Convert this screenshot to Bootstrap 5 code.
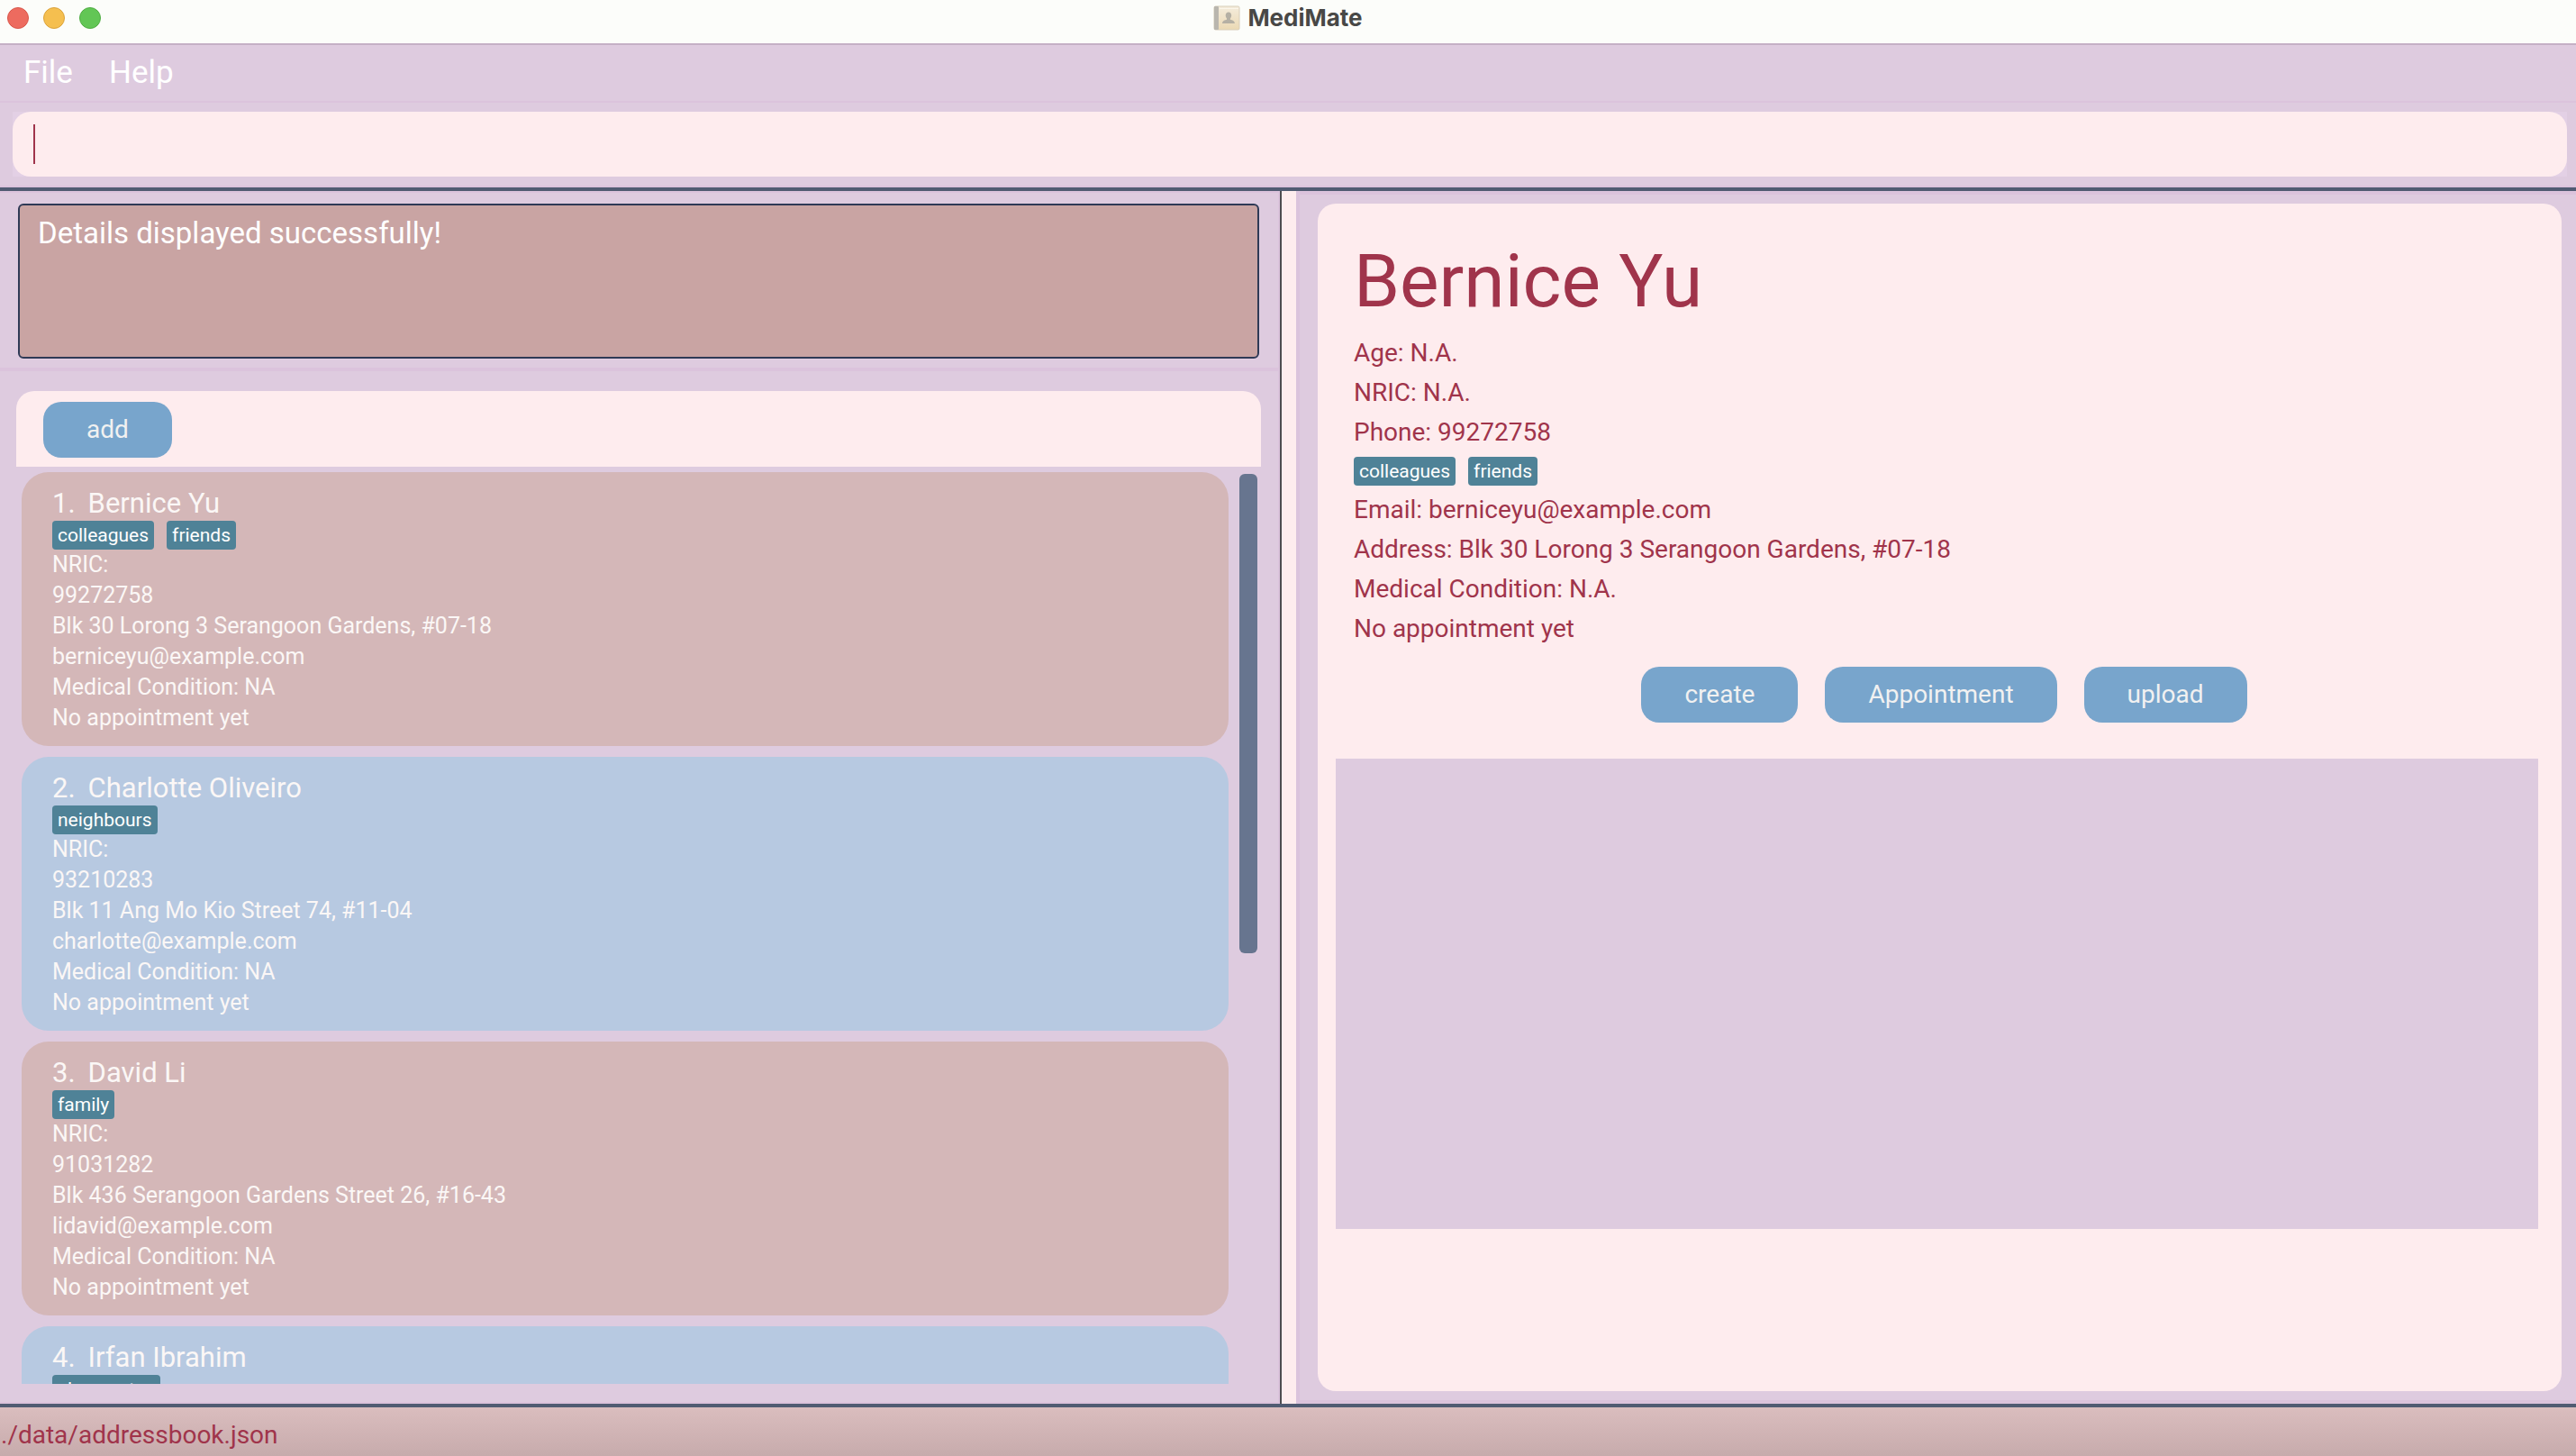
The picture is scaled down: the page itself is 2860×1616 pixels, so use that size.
<!DOCTYPE html>
<html lang="en">
<head>
<meta charset="utf-8">
<meta name="viewport" content="width=device-width, initial-scale=1">
<title>MediMate</title>
<link rel="stylesheet" href="https://cdn.jsdelivr.net/npm/bootstrap@5.3.0/dist/css/bootstrap.min.css">
<script src="https://cdn.jsdelivr.net/npm/bootstrap@5.3.0/dist/js/bootstrap.bundle.min.js"></script>
<style>
  :root {
    --lilac: #decbdf;
    --lilac-edge: #dbc3dc;
    --blush: #feecee;
    --wine: #a0344b;
    --slate: #505b72;
    --steel: #78a5cc;
  }
  body { font-family: Roboto, "Liberation Sans", sans-serif; background: var(--lilac); font-size: 25px; line-height: 34px; }
  .title-bar { height: 50px; padding: 0 8px 9px; background: #fcfdfa; border-bottom: 2px solid #c5b0c6; display: grid; grid-template-columns: 1fr auto 1fr; align-items: center; }
  .light { width: 24px; height: 24px; border-radius: 50%; border: 1px solid; }
  .light-close { background: #ed6b5f; border-color: #d9574b; }
  .light-min { background: #f5bf4f; border-color: #dba33b; }
  .light-max { background: #62c655; border-color: #50ad43; }
  .window-name { font-family: Inter, "Liberation Sans", sans-serif; font-size: 26px; line-height: 30px; font-weight: 700; color: #484846; }
  .menu-strip { height: 64px; padding-left: 6px; border-bottom: 2px solid var(--lilac-edge); }
  .menu-item { border: 0; background: none; color: #fff; font-size: 35px; line-height: 62px; padding: 0 20px; }
  .command-row { padding: 10px 10px 10px 14px; border-bottom: 2px solid var(--lilac-edge); }
  .command-well { background: #e3d0e5; }
  .command-box { height: 72px; border: 0; border-radius: 20px; color: var(--wine); font-size: 28px; padding: 0 24px; caret-color: transparent;
    background: linear-gradient(var(--wine), var(--wine)) 23px 50% / 2px 44px no-repeat var(--blush); }
  .command-box:focus { outline: 0; }
  .workspace { border-top: 4px solid var(--slate); border-bottom: 4px solid var(--slate); min-height: 0; }
  .pane { flex: 1 1 calc(50% - 9px); min-width: 0; min-height: 0; }
  .splitter { flex: 0 0 18px; background: var(--blush); border-left: 2px solid #4d4c50; }
  .pane-left { border: solid var(--lilac-edge); border-width: 2px 2px 2px 0; }
  .pane-right { border: 4px solid var(--lilac-edge); border-right: 0; padding: 10px 16px 10px 20px; }
  .result-row { padding: 12px 21px 10px 20px; border-bottom: 4px solid var(--lilac-edge); }
  .result-box { display: block; width: 100%; height: 172px; resize: none; background: #c9a4a3; color: #fff; border: 2px solid #2f3a56; border-radius: 6px; padding: 9px 20px; font-size: 33px; line-height: 44px; }
  .result-box:focus { outline: 0; }
  .person-area { padding: 22px 19px 20px 18px; min-height: 0; }
  .tool-strip { height: 84px; padding: 12px 30px; background: var(--blush); border-radius: 20px 20px 0 0; }
  .act { height: 62px; border: 0; border-radius: 20px; background: var(--steel); color: #f1f1f1; font-size: 28px; line-height: 62px; padding: 0 48px; }
  .list-area { padding: 0 4px 0 6px; min-height: 0; }
  .people { padding-top: 6px; min-width: 0; overflow: hidden; }
  .person { border-radius: 30px; padding: 16px 34px 14px; margin-bottom: 12px; color: #fbf7f6; flex-shrink: 0; }
  .person:nth-child(odd) { background: #d4b7b8; }
  .person:nth-child(even) { background: #b7c9e1; }
  .person-name { font-size: 31px; line-height: 38px; font-weight: 400; margin: 0; gap: 14px; }
  .tag { height: 32px; line-height: 32px; font-size: 21px; padding: 0 6px; border-radius: 4px; background: #4f8297; color: #fff; }
  .tag-row { gap: 14px; }
  .scroll-track { flex: 0 0 20px; margin-left: 12px; padding-top: 8px; }
  .scroll-thumb { height: 532px; border-radius: 6px; background: #67758f; }
  .details { background: var(--blush); border-radius: 20px; padding: 36px 26px 0 20px; color: var(--wine); font-size: 28px; line-height: 44px; }
  .details-text { padding-left: 20px; }
  .details-text .tag-row { margin: 5px 0; }
  .details-name { font-size: 82px; line-height: 100px; font-weight: 400; margin: 0 0 8px; }
  .act-row { gap: 30px; padding: 20px 0 40px 16px; }
  .preview { background: var(--lilac); margin-bottom: 180px; }
  .path-bar { height: 54px; padding-left: 1px; font-size: 28px; line-height: 62px; color: var(--wine); background: linear-gradient(#dabdbe, #c7abac); }
</style>
</head>
<body class="vh-100 d-flex flex-column overflow-hidden">
  <header class="title-bar flex-shrink-0">
    <div class="d-flex gap-3">
      <span class="light light-close"></span>
      <span class="light light-min"></span>
      <span class="light light-max"></span>
    </div>
    <div class="d-flex align-items-center gap-2">
      <svg width="30" height="28" viewBox="0 0 30 28" aria-hidden="true">
        <defs><linearGradient id="cover" x1="0" y1="0" x2="0" y2="1"><stop offset="0" stop-color="#f4ecdc"/><stop offset="1" stop-color="#ebd9b4"/></linearGradient></defs>
        <rect x="1" y="1" width="28" height="26" rx="1.5" fill="url(#cover)" stroke="#d8ceb9"/>
        <rect x="1" y="1" width="5" height="26" rx="1" fill="#b9b6ae"/>
        <path d="M7 3.500h21" stroke="#fbf6ea"/>
        <path d="M17 7.500c2 0 3.200 1.500 3.200 3.600 0 1.600-.6 2.700-1.300 3.400v1.300c2 .6 5 1.300 5 4.200H10c0-2.900 3-3.600 5-4.200v-1.300c-.7-.7-1.300-1.800-1.300-3.400 0-2.100 1.300-3.600 3.300-3.600z" fill="#b5b0a4"/>
      </svg>
      <span class="window-name">MediMate</span>
    </div>
  </header>

  <nav class="menu-strip d-flex flex-shrink-0" aria-label="Main menu">
    <button type="button" class="menu-item">File</button>
    <button type="button" class="menu-item">Help</button>
  </nav>

  <div class="command-row flex-shrink-0">
    <div class="command-well"><input type="text" class="command-box d-block w-100" aria-label="Command"></div>
  </div>

  <main class="workspace d-flex flex-grow-1">
    <section class="pane pane-left d-flex flex-column">
      <div class="result-row">
        <textarea class="result-box" readonly aria-label="Result">Details displayed successfully!</textarea>
      </div>
      <div class="person-area d-flex flex-column flex-grow-1">
        <div class="tool-strip flex-shrink-0"><button type="button" class="act">add</button></div>
        <div class="list-area d-flex flex-grow-1">
          <div class="people d-flex flex-column flex-grow-1">
            <article class="person">
              <h2 class="person-name d-flex"><span>1.</span><span>Bernice Yu</span></h2>
              <div class="tag-row d-flex"><span class="tag">colleagues</span><span class="tag">friends</span></div>
              <div>NRIC:</div>
              <div>99272758</div>
              <div>Blk 30 Lorong 3 Serangoon Gardens, #07-18</div>
              <div>berniceyu@example.com</div>
              <div>Medical Condition: NA</div>
              <div>No appointment yet</div>
            </article>
            <article class="person">
              <h2 class="person-name d-flex"><span>2.</span><span>Charlotte Oliveiro</span></h2>
              <div class="tag-row d-flex"><span class="tag">neighbours</span></div>
              <div>NRIC:</div>
              <div>93210283</div>
              <div>Blk 11 Ang Mo Kio Street 74, #11-04</div>
              <div>charlotte@example.com</div>
              <div>Medical Condition: NA</div>
              <div>No appointment yet</div>
            </article>
            <article class="person">
              <h2 class="person-name d-flex"><span>3.</span><span>David Li</span></h2>
              <div class="tag-row d-flex"><span class="tag">family</span></div>
              <div>NRIC:</div>
              <div>91031282</div>
              <div>Blk 436 Serangoon Gardens Street 26, #16-43</div>
              <div>lidavid@example.com</div>
              <div>Medical Condition: NA</div>
              <div>No appointment yet</div>
            </article>
            <article class="person">
              <h2 class="person-name d-flex"><span>4.</span><span>Irfan Ibrahim</span></h2>
              <div class="tag-row d-flex"><span class="tag">classmates</span></div>
            </article>
          </div>
          <div class="scroll-track"><div class="scroll-thumb"></div></div>
        </div>
      </div>
    </section>

    <div class="splitter"></div>

    <section class="pane pane-right d-flex flex-column">
      <div class="details d-flex flex-column flex-grow-1">
        <div class="details-text">
          <h1 class="details-name">Bernice Yu</h1>
          <div>Age: N.A.</div>
          <div>NRIC: N.A.</div>
          <div>Phone: 99272758</div>
          <div class="tag-row d-flex"><span class="tag">colleagues</span><span class="tag">friends</span></div>
          <div>Email: berniceyu@example.com</div>
          <div>Address: Blk 30 Lorong 3 Serangoon Gardens, #07-18</div>
          <div>Medical Condition: N.A.</div>
          <div>No appointment yet</div>
        </div>
        <div class="act-row d-flex justify-content-center">
          <button type="button" class="act">create</button>
          <button type="button" class="act">Appointment</button>
          <button type="button" class="act">upload</button>
        </div>
        <div class="preview flex-grow-1"></div>
      </div>
    </section>
  </main>

  <footer class="path-bar flex-shrink-0">./data/addressbook.json</footer>
</body>
</html>
